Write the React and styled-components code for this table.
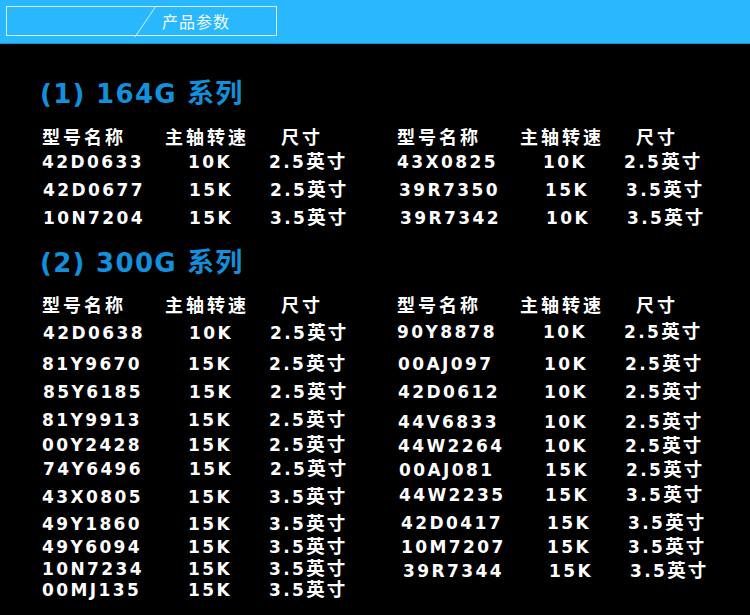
import React from 'react';
import styled, { createGlobalStyle } from 'styled-components';

const GlobalStyle = createGlobalStyle`
  html, body {
    margin: 0;
    padding: 0;
    background: #000;
  }
  body {
    font-family: "DejaVu Sans", "Noto Sans CJK SC", sans-serif;
  }
`;

// [model, rpm, size, distance from previous row centre, x drift]
const series = [
  {
    title: '(1) 164G',
    titleGap: 35,
    headGap: 17,
    left: [
      ['42D0633', '10K', '2.5', 26, 0],
      ['42D0677', '15K', '2.5', 28, 1],
      ['10N7204', '15K', '3.5', 28, 1],
    ],
    right: [
      ['43X0825', '10K', '2.5', 26, 0],
      ['39R7350', '15K', '3.5', 28, 2],
      ['39R7342', '10K', '3.5', 28, 3],
    ],
  },
  {
    title: '(2) 300G',
    titleGap: 20,
    headGap: 16,
    left: [
      ['42D0638', '10K', '2.5', 29, 1],
      ['81Y9670', '15K', '2.5', 31, 0],
      ['85Y6185', '15K', '2.5', 28, 1],
      ['81Y9913', '15K', '2.5', 28, 0],
      ['00Y2428', '15K', '2.5', 25, 0],
      ['74Y6496', '15K', '2.5', 24, 1],
      ['43X0805', '15K', '3.5', 28, 0],
      ['49Y1860', '15K', '3.5', 27, 0],
      ['49Y6094', '15K', '3.5', 23, 0],
      ['10N7234', '15K', '3.5', 22, 0],
      ['00MJ135', '15K', '3.5', 21, 0],
    ],
    right: [
      ['90Y8878', '10K', '2.5', 28, 0],
      ['00AJ097', '10K', '2.5', 32, 1],
      ['42D0612', '10K', '2.5', 28, 1],
      ['44V6833', '10K', '2.5', 30, 1],
      ['44W2264', '10K', '2.5', 24, 1],
      ['00AJ081', '15K', '2.5', 24, 2],
      ['44W2235', '15K', '3.5', 25, 2],
      ['42D0417', '15K', '3.5', 28, 4],
      ['10M7207', '15K', '3.5', 24, 4],
      ['39R7344', '15K', '3.5', 24, 6],
    ],
  },
];

function Table({ rows }) {
  return (
    <TableBox>
      <HeadRow>
        <span>型号名称</span>
        <span>主轴转速</span>
        <span>尺寸</span>
      </HeadRow>
      {rows.map(([model, rpm, size, gap, dx]) => (
        <Row key={model} $gap={gap} $dx={dx}>
          <span>{model}</span>
          <span>{rpm}</span>
          <span>
            {size}
            <Zh>英寸</Zh>
          </span>
        </Row>
      ))}
    </TableBox>
  );
}

function App() {
  return (
    <Page>
      <GlobalStyle />
      <TopBar>
        <Tab>
          <Slash />
          <TabText>产品参数</TabText>
        </Tab>
      </TopBar>

      <Content>
        {series.map((s) => (
          <Section key={s.title} $gap={s.titleGap}>
            <Title>
              {s.title} <TitleZh>系列</TitleZh>
            </Title>
            <Tables $gap={s.headGap}>
              <Table rows={s.left} />
              <Table rows={s.right} />
            </Tables>
          </Section>
        ))}
      </Content>
    </Page>
  );
}

const Page = styled.div`
  width: 750px;
  height: 615px;
  overflow: hidden;
  background: #000;
`;

const TopBar = styled.div`
  height: 44px;
  box-sizing: border-box;
  background: #29b8fe;
  border-bottom: 1px solid #1a90c8;
  padding: 6px 0 0 6px;
`;

const Tab = styled.div`
  position: relative;
  width: 271px;
  height: 30px;
  box-sizing: border-box;
  border: 1px solid #d6f1ff;
  display: flex;
  align-items: center;
  padding-left: 155px;
`;

const Slash = styled.div`
  position: absolute;
  left: 138px;
  top: -1px;
  width: 1px;
  height: 31px;
  background: #d6f1ff;
  transform: skewX(-34deg);
`;

const TabText = styled.span`
  font-family: "Noto Sans CJK SC", sans-serif;
  font-size: 16px;
  color: #f2fbff;
  letter-spacing: 1px;
`;

const Content = styled.div`
  padding-left: 40px;
`;

const Section = styled.div`
  margin-top: ${(p) => p.$gap}px;
`;

const Title = styled.div`
  height: 30px;
  line-height: 30px;
  font-size: 26px;
  font-weight: bold;
  letter-spacing: 1.3px;
  color: #1190dc;
  white-space: nowrap;
`;

const TitleZh = styled.span`
  font-family: "Noto Sans CJK SC", sans-serif;
  font-size: 27px;
  line-height: 0;
  letter-spacing: 1px;
`;

const Tables = styled.div`
  display: flex;
  margin-top: ${(p) => p.$gap}px;
`;

const TableBox = styled.div`
  width: 356px;
  display: flex;
  flex-direction: column;
  padding-left: 2px;
`;

const Row = styled.div`
  display: grid;
  grid-template-columns: 146px 81px auto;
  height: 20px;
  line-height: 20px;
  margin-top: ${(p) => p.$gap - 20}px;
  padding-left: ${(p) => p.$dx}px;
  font-size: 17px;
  font-weight: bold;
  letter-spacing: 2.4px;
  color: #fff;
  white-space: nowrap;
`;

const HeadRow = styled(Row).attrs({ $gap: 20, $dx: 0 })`
  grid-template-columns: 123px 116px auto;
  font-family: "Noto Sans CJK SC", sans-serif;
  font-size: 18px;
  letter-spacing: 3px;
`;

const Zh = styled.span`
  font-family: "Noto Sans CJK SC", sans-serif;
  font-size: 18.5px;
  line-height: 0;
  letter-spacing: 2px;
`;

export default App;
